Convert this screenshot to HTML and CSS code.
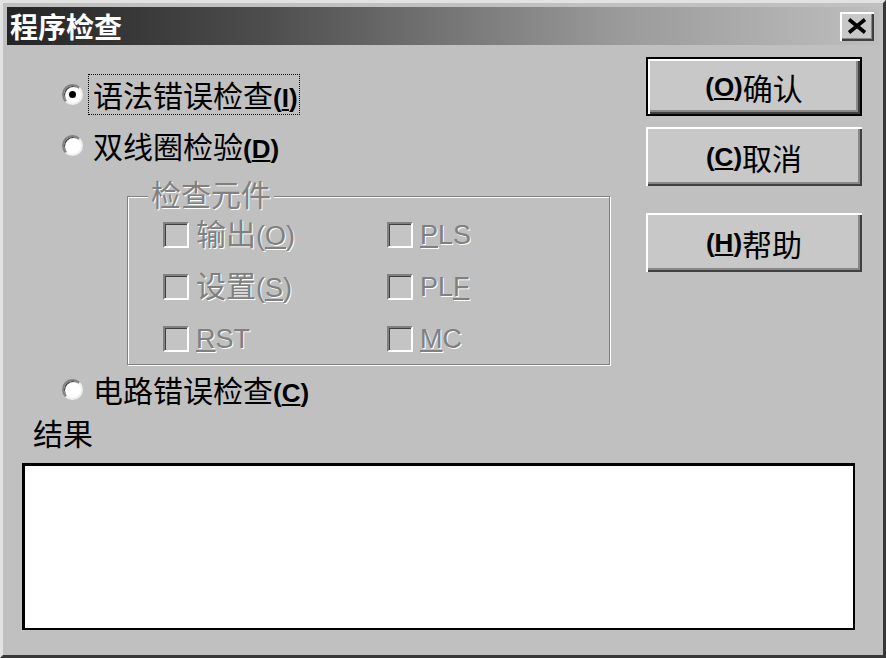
FILE: index.html
```html
<!DOCTYPE html>
<html lang="zh">
<head>
<meta charset="utf-8">
<title>程序检查</title>
<link rel="stylesheet" href="styles.css">
</head>
<body>
<div class="window">
  <div class="titlebar">
    <span class="title">程序检查</span>
    <button class="close" aria-label="关闭">
      <svg width="20" height="16" viewBox="0 0 20 16"><path d="M2 1.5 L18 14.5 M18 1.5 L2 14.5" stroke="#000" stroke-width="3.6" fill="none"/></svg>
    </button>
  </div>
  <div class="content">
    <div class="top">
      <div class="options">
        <div class="radio-row">
          <span class="radio checked"></span>
          <span class="rlabel focus">语法错误检查<span class="mn">(<u>I</u>)</span></span>
        </div>
        <div class="radio-row row2">
          <span class="radio"></span>
          <span class="rlabel">双线圈检验<span class="mn">(<u>D</u>)</span></span>
        </div>
        <fieldset class="group">
          <legend class="legend">检查元件</legend>
          <div class="checks">
            <div class="check"><span class="cb"></span><span class="dlabel">输出<span class="dmn">(<u>O</u>)</span></span></div>
            <div class="check"><span class="cb"></span><span class="dlabel lat"><u>P</u>LS</span></div>
            <div class="check"><span class="cb"></span><span class="dlabel">设置<span class="dmn">(<u>S</u>)</span></span></div>
            <div class="check"><span class="cb"></span><span class="dlabel lat">PL<u>F</u></span></div>
            <div class="check"><span class="cb"></span><span class="dlabel lat"><u>R</u>ST</span></div>
            <div class="check"><span class="cb"></span><span class="dlabel lat"><u>M</u>C</span></div>
          </div>
        </fieldset>
        <div class="radio-row row3">
          <span class="radio"></span>
          <span class="rlabel">电路错误检查<span class="mn">(<u>C</u>)</span></span>
        </div>
      </div>
      <div class="buttons">
        <button class="btn default"><span class="mn">(<u>O</u>)</span>确认</button>
        <button class="btn b2"><span class="mn">(<u>C</u>)</span>取消</button>
        <button class="btn b3"><span class="mn">(<u>H</u>)</span>帮助</button>
      </div>
    </div>
    <div class="result-label">结果</div>
    <div class="result"></div>
  </div>
</div>
</body>
</html>
```

FILE: styles.css
```css
html, body {
  margin: 0;
  padding: 0;
  background: #c0c0c0;
}
body {
  font-family: "Noto Sans CJK SC", sans-serif;
  color: #000;
}
.window {
  width: 886px;
  height: 658px;
  box-sizing: border-box;
  background: #c0c0c0;
  border: 3px solid;
  border-color: #e2e2e2 #383838 #383838 #e2e2e2;
  padding: 4px;
  display: flex;
  flex-direction: column;
}
.titlebar {
  height: 38px;
  flex: none;
  display: flex;
  align-items: center;
  justify-content: space-between;
  padding: 0 5px 0 3px;
  background: linear-gradient(to right, #242424, #4e4e4e 30%, #9a9a9a 70%, #bebebe);
}
.title {
  color: #fff;
  font-weight: 700;
  font-size: 28px;
  line-height: 30px;
}
.close {
  width: 34px;
  height: 29px;
  box-sizing: border-box;
  padding: 0;
  border: none;
  background: #c8c8c8;
  box-shadow: inset 2px 2px 0 #fff, inset -2px -2px 0 #404040, inset -3px -3px 0 #888;
  display: flex;
  align-items: center;
  justify-content: center;
}
.close svg { display: block; }
.content {
  flex: 1;
  display: flex;
  flex-direction: column;
}
.top {
  display: flex;
  justify-content: space-between;
  align-items: flex-start;
  padding: 0 17px 0 55px;
}
.options {
  margin-top: 29px;
  display: flex;
  flex-direction: column;
}
.radio-row {
  height: 41px;
  display: flex;
  align-items: center;
}
.row2 { margin-top: 10px; }
.row3 { margin-top: 4px; }
.radio {
  width: 21px;
  height: 21px;
  box-sizing: border-box;
  border-radius: 50%;
  background: #fff;
  border: 2px solid;
  border-color: #808080 #f0f0f0 #f0f0f0 #808080;
  box-shadow: inset 1px 1px 0 #404040;
  position: relative;
  flex: none;
}
.radio.checked::after {
  content: "";
  position: absolute;
  left: 5px;
  top: 5px;
  width: 7px;
  height: 7px;
  border-radius: 50%;
  background: #000;
}
.rlabel {
  margin-left: 5px;
  height: 41px;
  box-sizing: border-box;
  border: 1px dotted transparent;
  padding: 0 1px 0 4px;
  font-size: 30px;
  line-height: 39px;
  white-space: nowrap;
}
.rlabel.focus { border-color: #000; }
.mn {
  font-family: "Liberation Sans", sans-serif;
  font-weight: 700;
  font-size: 26px;
}
.group {
  margin: 15px 0 0 65px;
  width: 483px;
  box-sizing: border-box;
  border: 1px solid #808080;
  box-shadow: 1px 1px 0 #fff, inset 1px 1px 0 #fff;
  padding: 9px 0 10px 20px;
  min-width: 0;
}
.legend {
  padding: 0 3px;
  font-family: "Liberation Sans", "Noto Sans CJK SC", sans-serif;
  font-size: 30px;
  line-height: 30px;
  color: #808080;
  text-shadow: 1px 1px 0 #fff;
  background: #c0c0c0;
}
.checks {
  padding-left: 15px;
  display: grid;
  grid-template-columns: 224px 1fr;
  row-gap: 22px;
}
.check {
  height: 30px;
  display: flex;
  align-items: center;
}
.cb {
  width: 26px;
  height: 26px;
  box-sizing: border-box;
  border: 2px solid;
  border-color: #808080 #fff #fff #808080;
  box-shadow: inset 1px 1px 0 #404040;
  background: #c4c4c4;
  flex: none;
}
.dlabel {
  margin-left: 7px;
  font-family: "Liberation Sans", "Noto Sans CJK SC", sans-serif;
  font-size: 30px;
  line-height: 30px;
  color: #808080;
  text-shadow: 1px 1px 0 #fff;
  white-space: nowrap;
}
.dmn, .dlabel.lat {
  font-size: 27px;
}
.buttons {
  margin-top: 12px;
  width: 216px;
  display: flex;
  flex-direction: column;
}
.btn {
  height: 59px;
  width: 216px;
  box-sizing: border-box;
  padding: 0;
  border: none;
  background: #c8c8c8;
  box-shadow: inset 2px 2px 0 #fff, inset -2px -2px 0 #404040, inset -4px -4px 0 #888;
  font-family: "Noto Sans CJK SC", sans-serif;
  font-size: 30px;
  line-height: 30px;
  color: #000;
  display: flex;
  align-items: center;
  justify-content: center;
}
.btn.default {
  border: 2px solid #000;
}
.b2 { margin-top: 11px; }
.b3 { margin-top: 27px; }
.result-label {
  margin-top: 7px;
  padding-left: 26px;
  font-size: 30px;
  line-height: 30px;
}
.result {
  margin: 16px 24px 0 15px;
  height: 167px;
  box-sizing: border-box;
  background: #fff;
  border: 2px solid #000;
  border-left-width: 3px;
  border-top-width: 3px;
}
```
